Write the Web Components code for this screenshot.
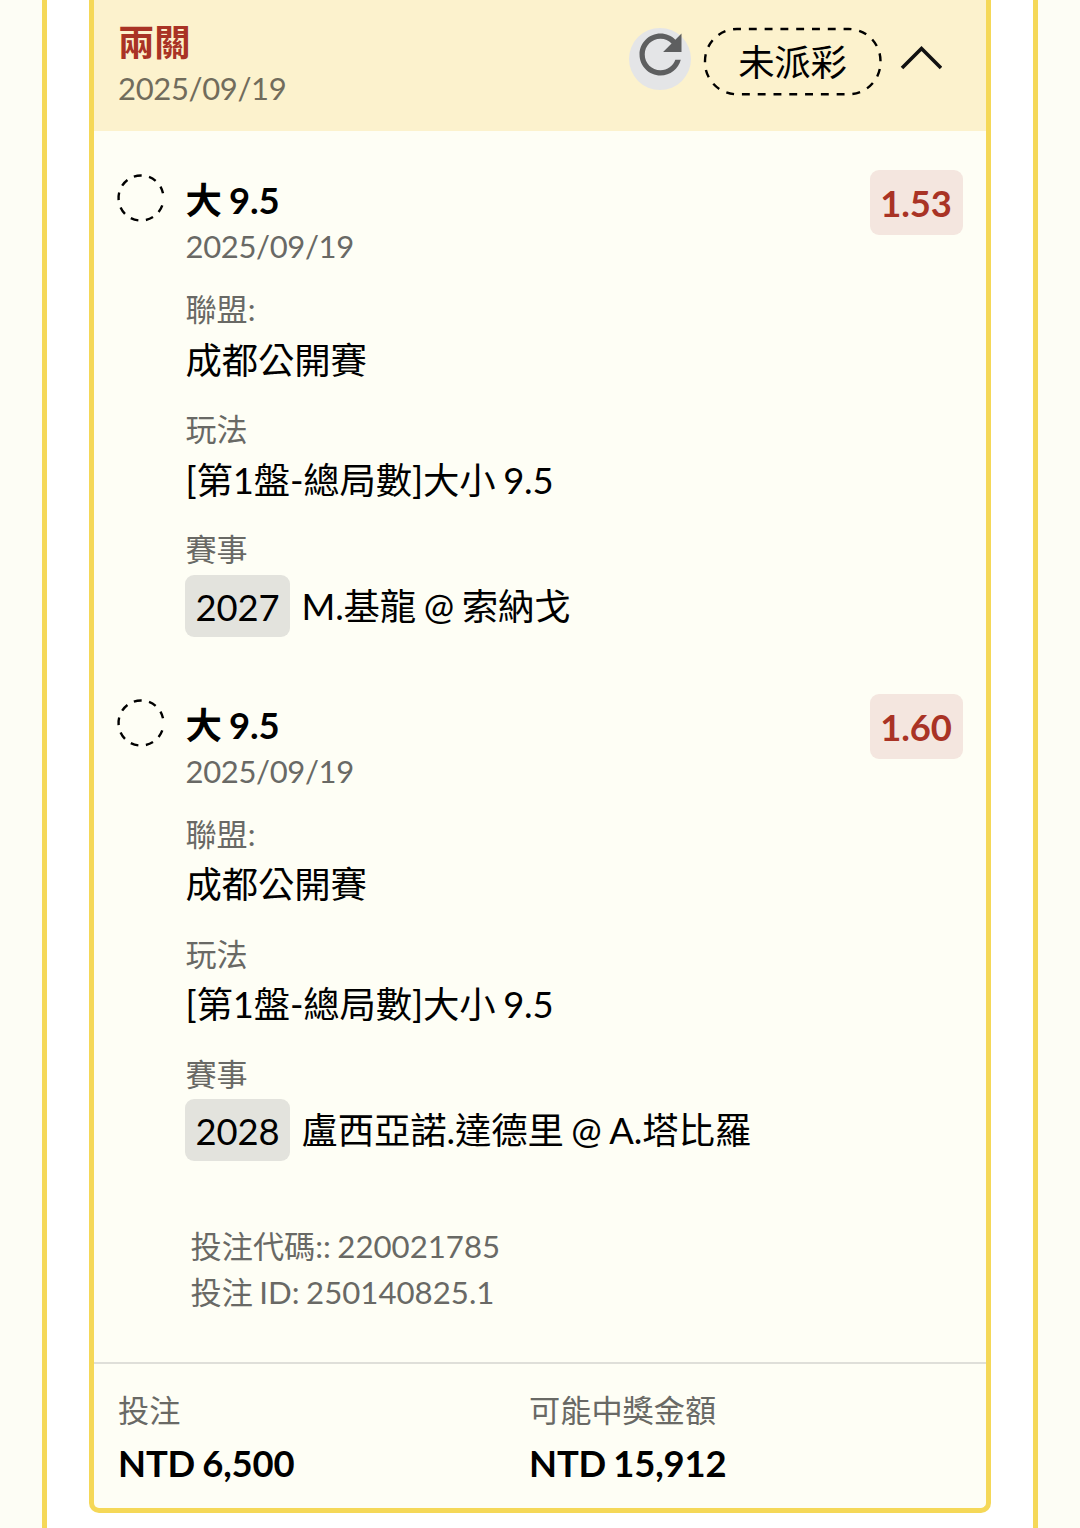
<!DOCTYPE html>
<html lang="zh-Hant">
<head>
<meta charset="utf-8">
<title>投注記錄</title>
<style>
    html, body
    {
        margin      : 0;
        height      : 1528px;
        overflow    : hidden;
    }

    body
    {
        --line      : #f5d858;
        --cream     : #fefef5;
        --red       : #a93325;
        --muted     : #696965;
        background  : #fdfdf5;
        color       : #000;
        font-family : Lato, "Noto Sans CJK TC", sans-serif;
        font-size   : 36.4px;
        word-spacing: -1.5px;
        letter-spacing: -.15px;
    }
</style>
</head>
<body>

<bet-panel>
    <bet-card>
        <bet-header slot="header" name="兩關" date="2025/09/19" status="未派彩"></bet-header>
        <bet-leg pick="大 9.5" date="2025/09/19" odds="1.53">
            <bet-field label="聯盟:">成都公開賽</bet-field>
            <bet-field label="玩法">[第1盤-總局數]大小 9.5</bet-field>
            <bet-field label="賽事" code="2027">M.基龍 @ 索納戈</bet-field>
        </bet-leg>
        <bet-leg pick="大 9.5" date="2025/09/19" odds="1.60">
            <bet-field label="聯盟:">成都公開賽</bet-field>
            <bet-field label="玩法">[第1盤-總局數]大小 9.5</bet-field>
            <bet-field label="賽事" code="2028">盧西亞諾.達德里 @ A.塔比羅</bet-field>
        </bet-leg>
        <bet-reference>
            <div>投注代碼:: 220021785</div>
            <div>投注 ID: 250140825.1</div>
        </bet-reference>
        <bet-total slot="footer" label="投注">NTD 6,500</bet-total>
        <bet-total slot="footer" label="可能中獎金額">NTD 15,912</bet-total>
    </bet-card>
</bet-panel>

<script>
class BetPanel extends HTMLElement
{
    connectedCallback()
    {
        this.attachShadow({mode:"open"}).innerHTML =
        `
        <style>
            :host
            {
                display      : block;
                box-sizing   : border-box;
                height       : 1528px;
                margin       : 0 42px;
                padding      : 0 42px;
                border       : solid var(--line);
                border-width : 0 5px;
                background   : #fff;
            }
        </style>
        <slot></slot>`;
    }
}

class BetCard extends HTMLElement
{
    connectedCallback()
    {
        this.attachShadow({mode:"open"}).innerHTML =
        `
        <style>
            :host
            {
                display       : flex;
                flex-direction: column;
                box-sizing    : border-box;
                height        : 1513px;
                border        : 5px solid var(--line);
                border-top    : 0;
                border-radius : 0 0 10px 10px;
                background    : var(--cream);
            }

            .body
            {
                flex          : 1;
                padding       : 39px 23.5px 0;
            }

            .totals
            {
                display       : grid;
                grid-template-columns: 411px 1fr;
                box-sizing    : border-box;
                height        : 146.5px;
                padding       : 21.5px 24px 0;
                border-top    : 2px solid #dfdfd9;
            }
        </style>
        <slot name="header"></slot>
        <div class="body"><slot></slot></div>
        <div class="totals"><slot name="footer"></slot></div>`;
    }
}

class BetHeader extends HTMLElement
{
    connectedCallback()
    {
        this.attachShadow({mode:"open"}).innerHTML =
        `
        <style>
            :host
            {
                display        : flex;
                justify-content: space-between;
                box-sizing     : border-box;
                height         : 130.6px;
                padding        : 18.5px 44px 0 24px;
                line-height    : 46px;
                background     : #fcf2cd;
            }

            .name
            {
                color          : var(--red);
                font-weight    : bold;
            }

            .date
            {
                color          : #716c5c;
                font-size      : 31px;
                letter-spacing : -.35px;
            }

            .actions
            {
                display        : flex;
                height         : 84px;
            }

            .refresh
            {
                width          : 62px;
                height         : 62px;
                margin-top     : 9.5px;
                border-radius  : 50%;
                background     : #e4e5e7;
            }

            .refresh svg
            {
                display        : block;
                margin-top     : -5px;
            }

            .status
            {
                display        : grid;
                width          : 179px;
                height         : 69px;
                margin         : 8.5px 18px 0 12px;
            }

            .status > *
            {
                grid-area      : 1 / 1;
                place-self     : center;
            }

            .chevron
            {
                margin-top     : 26.5px;
            }
        </style>
        <div>
            <div class="name">${this.getAttribute("name")}</div>
            <div class="date">${this.getAttribute("date")}</div>
        </div>
        <div class="actions">
            <div class="refresh">
                <svg width="63" height="63" viewBox="0 0 24 24" fill="#5e5f60">
                    <path d="M17.65 6.35C16.2 4.9 14.21 4 12 4c-4.42 0-7.99 3.58-7.99 8s3.57 8 7.99 8c3.73 0 6.84-2.55 7.73-6h-2.08c-.82 2.33-3.04 4-5.65 4-3.31 0-6-2.69-6-6s2.69-6 6-6c1.66 0 3.14.69 4.22 1.78L13 11h7V4l-2.35 2.35z"/>
                </svg>
            </div>
            <div class="status">
                <svg width="179" height="69" viewBox="0 0 179 69" fill="none" stroke="#000" stroke-width="2.4">
                    <path pathLength="432" stroke-dasharray="8 8" stroke-dashoffset="4"
                        d="M34 2H145.5A32 32 0 0 1 177.5 34V35.3A32 32 0 0 1 145.5 67.3H34A32 32 0 0 1 2 35.3V34A32 32 0 0 1 34 2Z"/>
                </svg>
                <span>${this.getAttribute("status")}</span>
            </div>
            <svg class="chevron" width="42" height="26" viewBox="0 0 42 26" fill="none" stroke="#111" stroke-width="3.6">
                <path d="M2 23L21.5 3.5L41 23"/>
            </svg>
        </div>`;
    }
}

class BetLeg extends HTMLElement
{
    connectedCallback()
    {
        this.attachShadow({mode:"open"}).innerHTML =
        `
        <style>
            :host
            {
                display     : grid;
                grid-template-columns: 68px 1fr auto;
                align-items : start;
                height      : 524.6px;
            }

            .mark
            {
                margin-top  : 4.5px;
                margin-left : -.5px;
            }

            .info
            {
                padding-top : 7.4px;
                line-height : 46px;
            }

            .pick
            {
                font-weight : bold;
            }

            .date
            {
                color       : var(--muted);
                font-size   : 31px;
                letter-spacing: -.35px;
            }

            .fields
            {
                display       : flex;
                flex-direction: column;
                gap           : 21.5px;
                margin-top    : 17.4px;
            }

            .odds
            {
                box-sizing    : border-box;
                width         : 93px;
                height        : 65px;
                border-radius : 9px;
                background    : #f4e6df;
                color         : var(--red);
                font-weight   : bold;
                line-height   : 67px;
                text-align    : center;
            }
        </style>
        <svg class="mark" width="48" height="48" viewBox="0 0 48 48" fill="none" stroke="#000" stroke-width="2.4">
            <path stroke-dasharray="7.7 7.5" d="M45.27 31.33A22.5 22.5 0 1 1 46 19.3"/>
        </svg>
        <div class="info">
            <div class="pick">${this.getAttribute("pick")}</div>
            <div class="date">${this.getAttribute("date")}</div>
            <div class="fields"><slot></slot></div>
        </div>
        <div class="odds">${this.getAttribute("odds")}</div>`;
    }
}

class BetField extends HTMLElement
{
    connectedCallback()
    {
        const code = this.getAttribute("code");

        this.attachShadow({mode:"open"}).innerHTML =
        `
        <style>
            :host
            {
                display     : block;
                white-space : nowrap;
            }

            .label
            {
                height      : 48.4px;
                color       : var(--muted);
                font-size   : 31.1px;
                line-height : 46px;
                letter-spacing: 0;
            }

            .value
            {
                display     : flex;
                align-items : center;
                gap         : 11.5px;
                line-height : 50px;
            }

            .code
            {
                width         : 105px;
                height        : 62px;
                margin-left   : -.5px;
                border-radius : 9px;
                background    : #e3e3dd;
                line-height   : 65px;
                text-align    : center;
            }
        </style>
        <div class="label">${this.getAttribute("label")}</div>
        <div class="value">${code ? `<span class="code">${code}</span>` : ""}<span><slot></slot></span></div>`;
    }
}

class BetReference extends HTMLElement
{
    connectedCallback()
    {
        this.attachShadow({mode:"open"}).innerHTML =
        `
        <style>
            :host
            {
                display     : block;
                margin      : 4px 0 0 73px;
                color       : var(--muted);
                font-size   : 31.2px;
                line-height : 46.5px;
                letter-spacing: 0;
            }
        </style>
        <slot></slot>`;
    }
}

class BetTotal extends HTMLElement
{
    connectedCallback()
    {
        this.attachShadow({mode:"open"}).innerHTML =
        `
        <style>
            :host
            {
                display     : block;
                font-weight : bold;
                line-height : 50px;
            }

            .label
            {
                height      : 53px;
                color       : var(--muted);
                font-size   : 31.2px;
                font-weight : normal;
                letter-spacing: 0;
            }
        </style>
        <div class="label">${this.getAttribute("label")}</div>
        <slot></slot>`;
    }
}

customElements.define("bet-panel",BetPanel);
customElements.define("bet-card",BetCard);
customElements.define("bet-header",BetHeader);
customElements.define("bet-leg",BetLeg);
customElements.define("bet-field",BetField);
customElements.define("bet-reference",BetReference);
customElements.define("bet-total",BetTotal);
</script>
</body>
</html>
